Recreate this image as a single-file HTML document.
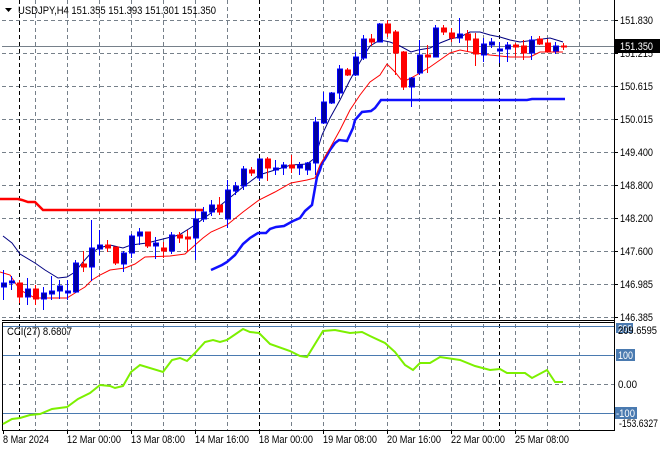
<!DOCTYPE html>
<html><head><meta charset="utf-8"><style>
html,body{margin:0;padding:0;background:#fff;}
svg{display:block;font-family:"Liberation Sans",sans-serif;}
</style></head><body>
<svg width="660" height="450" viewBox="0 0 660 450" xmlns="http://www.w3.org/2000/svg">
<rect width="660" height="450" fill="#fff"/>
<g stroke="#76808a" stroke-width="1" stroke-dasharray="4,3" fill="none">
<path d="M35.5 0V319M67.5 0V319M99.5 0V319M131.5 0V319M163.5 0V319M195.5 0V319M227.5 0V319M291.5 0V319M323.5 0V319M355.5 0V319M387.5 0V319M419.5 0V319M451.5 0V319M483.5 0V319M515.5 0V319M547.5 0V319M579.5 0V319"/>
<path d="M35.5 324V430M67.5 324V430M99.5 324V430M131.5 324V430M163.5 324V430M195.5 324V430M227.5 324V430M291.5 324V430M323.5 324V430M355.5 324V430M387.5 324V430M419.5 324V430M451.5 324V430M483.5 324V430M515.5 324V430M547.5 324V430M579.5 324V430"/>
<path d="M2 20.5H614M2 53.5H614M2 86.5H614M2 119.5H614M2 152.5H614M2 185.5H614M2 218.5H614M2 251.5H614M2 284.5H614M2 317.5H614M2 384.5H614"/>
</g>
<g stroke="#000" stroke-width="1" stroke-dasharray="4,3">
<path d="M19.5 0V319M259.5 0V319M499.5 0V319M19.5 324V430M259.5 324V430M499.5 324V430"/>
</g>
<line x1="2" y1="46.5" x2="614" y2="46.5" stroke="#76808a"/>
<g stroke="#4a7ab0" stroke-width="1">
<line x1="2" y1="326.5" x2="614" y2="326.5"/>
<line x1="2" y1="355.5" x2="614" y2="355.5"/>
<line x1="2" y1="413.5" x2="614" y2="413.5"/>
</g>
<g stroke="#000" stroke-width="1" fill="none">
<line x1="614.5" y1="0" x2="614.5" y2="431"/>
<line x1="2" y1="320.5" x2="614" y2="320.5"/>
<line x1="2" y1="322.5" x2="614" y2="322.5"/>
<line x1="2" y1="430.5" x2="614" y2="430.5"/>
<line x1="2.5" y1="322" x2="2.5" y2="431"/>
</g>
<g stroke="#000">
<path d="M614 20.5h4M614 53.5h4M614 86.5h4M614 119.5h4M614 152.5h4M614 185.5h4M614 218.5h4M614 251.5h4M614 284.5h4M614 317.5h4"/>
<path d="M3.5 430v4M67.5 430v4M131.5 430v4M195.5 430v4M259.5 430v4M323.5 430v4M387.5 430v4M451.5 430v4M515.5 430v4"/>
</g>
<polyline fill="none" stroke="#ff0000" stroke-width="2.5" points="0,199 18,199 22,200 28,202 35,202 43,210 203,210"/>
<polyline fill="none" stroke="#1010ff" stroke-width="2.5" points="211,270 222,265 227,262 235,255 243,244 250,238 258,233 266,233 270,229 276,227 284,226 293,221 300,218 305,211 312,205 315,188 317,177 320,170 322,163 325,159 330,150 335,143 339,140 347,141 353,128 355,120 362,112 371,111 375,108 381,100 388,100 527,100 532,99 565,99"/>
<polyline fill="none" stroke="#000080" stroke-width="1" points="3,236 12,243 20,254 35,263 45,270 58,278 67,277 75,272 83,262 91,253 99,248 110,245 123,248 131,245 147,243 163,239 179,235 195,225 211,213 227,200 243,187 259,175 275,170 291,165 307,164 315,158 322,135 330,118 340,100 350,80 360,62 370,46 380,40 390,42 400,46 411,52 418,50 430,48 440,43 450,39 460,37 470,32 480,32 490,35 500,37 510,40 520,42 535,40 550,38 563,42"/>
<polyline fill="none" stroke="#ff0000" stroke-width="1" points="0,272 10,275 20,290 35,298 67,298 75,293 85,287 92,280 100,275 110,270 125,268 135,264 145,257 170,256 185,254 195,245 203,238 211,232 227,225 243,212 259,200 275,192 291,183 307,180 315,178 320,165 330,148 340,130 350,110 360,95 370,82 380,75 387,64 395,72 403,82 411,78 420,73 430,67 440,60 450,53 460,50 475,53 490,55 510,57 530,57 540,52 563,52"/>
<g>
<g stroke="#0000ff" fill="#0000a0">
<path d="M3.5 270V300M11.5 276V290M27.5 278V305M43.5 287V310M51.5 276V300M59.5 280V299M67.5 280V300M75.5 260V293M91.5 220V281M99.5 230V255M123.5 251V272M131.5 234V258M139.5 228V245M155.5 237V259M171.5 232V254M195.5 210V260M203.5 207V222M211.5 200V216M227.5 180V228M235.5 182V195M243.5 166V190M259.5 158V181M275.5 160V175M283.5 162V175M299.5 162V175M307.5 162V175M315.5 117V175M323.5 92V124M331.5 92V104M339.5 65V99M355.5 52V76M363.5 35V60M379.5 23V42M411.5 77V107M419.5 40V75M435.5 25V57M459.5 18V43M483.5 38V62M491.5 38V48M499.5 42V63M507.5 42V62M531.5 36V60M555.5 42V54"/>
<rect x="1.5" y="283" width="5" height="4"/><rect x="9.5" y="281" width="5" height="2"/><rect x="25.5" y="289" width="5" height="8"/><rect x="41.5" y="293" width="5" height="6"/><rect x="49.5" y="291" width="5" height="3"/><rect x="57.5" y="286" width="5" height="5"/><rect x="65.5" y="291" width="5" height="2"/><rect x="73.5" y="263" width="5" height="29"/><rect x="89.5" y="248" width="5" height="19"/><rect x="97.5" y="245" width="5" height="4"/><rect x="121.5" y="253" width="5" height="11"/><rect x="129.5" y="236" width="5" height="17"/><rect x="137.5" y="232" width="5" height="4"/><rect x="153.5" y="243" width="5" height="3"/><rect x="169.5" y="235" width="5" height="16"/><rect x="193.5" y="219" width="5" height="19"/><rect x="201.5" y="212" width="5" height="7"/><rect x="209.5" y="205" width="5" height="7"/><rect x="225.5" y="190" width="5" height="29"/><rect x="233.5" y="186" width="5" height="5"/><rect x="241.5" y="169" width="5" height="17"/><rect x="257.5" y="159" width="5" height="19"/><rect x="273.5" y="168" width="5" height="2"/><rect x="281.5" y="165" width="5" height="3"/><rect x="297.5" y="165" width="5" height="3"/><rect x="305.5" y="163" width="5" height="7"/><rect x="313.5" y="122" width="5" height="41"/><rect x="321.5" y="102" width="5" height="21"/><rect x="329.5" y="93" width="5" height="10"/><rect x="337.5" y="69" width="5" height="24"/><rect x="353.5" y="57" width="5" height="18"/><rect x="361.5" y="39" width="5" height="19"/><rect x="377.5" y="24" width="5" height="18"/><rect x="409.5" y="78" width="5" height="9"/><rect x="417.5" y="55" width="5" height="18"/><rect x="433.5" y="28" width="5" height="29"/><rect x="457.5" y="34" width="5" height="4"/><rect x="481.5" y="44" width="5" height="11"/><rect x="489.5" y="42" width="5" height="3"/><rect x="497.5" y="49" width="5" height="2"/><rect x="505.5" y="45" width="5" height="4"/><rect x="529.5" y="40" width="5" height="13"/><rect x="553.5" y="46" width="5" height="5"/>
</g>
<g stroke="#ff0000" fill="#ff0000">
<path d="M19.5 280V303M35.5 285V305M83.5 251V272M107.5 240V252M115.5 247V265M147.5 232V248M163.5 242V258M179.5 232V243M187.5 230V252M219.5 197V215M251.5 167V176M267.5 157V181M291.5 155V173M347.5 68V76M371.5 34V46M387.5 20V37M395.5 30V75M403.5 51V90M427.5 45V73M443.5 25V35M451.5 28V42M467.5 30V52M475.5 33V66M515.5 43V56M523.5 40V60M539.5 36V45M547.5 39V52M563.5 43V50"/>
<rect x="17.5" y="283" width="5" height="14"/><rect x="33.5" y="289" width="5" height="10"/><rect x="81.5" y="264" width="5" height="3"/><rect x="105.5" y="245" width="5" height="3"/><rect x="113.5" y="247" width="5" height="16"/><rect x="145.5" y="232" width="5" height="14"/><rect x="161.5" y="248" width="5" height="3"/><rect x="177.5" y="235" width="5" height="3"/><rect x="185.5" y="237" width="5" height="2"/><rect x="217.5" y="205" width="5" height="7"/><rect x="249.5" y="170" width="5" height="3"/><rect x="265.5" y="159" width="5" height="9"/><rect x="289.5" y="165" width="5" height="3"/><rect x="345.5" y="70" width="5" height="5"/><rect x="369.5" y="39" width="5" height="3"/><rect x="385.5" y="24" width="5" height="9"/><rect x="393.5" y="32" width="5" height="21"/><rect x="401.5" y="52" width="5" height="35"/><rect x="425.5" y="55" width="5" height="2"/><rect x="441.5" y="28" width="5" height="4"/><rect x="449.5" y="33" width="5" height="5"/><rect x="465.5" y="34" width="5" height="6"/><rect x="473.5" y="39" width="5" height="15"/><rect x="513.5" y="45" width="5" height="2"/><rect x="521.5" y="46" width="5" height="7"/><rect x="537.5" y="39" width="5" height="5"/><rect x="545.5" y="43" width="5" height="8"/><rect x="561.5" y="46" width="5" height="1"/>
</g>
</g>
<polyline fill="none" stroke="#7cf000" stroke-width="2" points="3,424 12,419 20,418 30,415 40,414 52,409 67,407 78,399 90,393 100,385 110,386 115,388 123,386 131,372 140,365 163,372 172,360 180,358 187,361 195,353 205,342 213,340 220,342 227,340 243,329 250,332 259,333 270,344 290,351 300,356 307,357 323,331 335,330 350,333 362,332 370,336 385,343 395,352 405,365 413,370 420,363 430,363 440,357 460,360 475,366 490,370 500,369 507,373 525,373 532,378 547,370 555,382 563,382"/>
<path d="M5 8h7l-3.5 4z" fill="#000"/>
<text x="18" y="14" font-size="11" fill="#000" textLength="198" lengthAdjust="spacingAndGlyphs">USDJPY,H4  151.355 151.393 151.301 151.350</text>
<text x="7" y="335" font-size="11" fill="#000" textLength="65" lengthAdjust="spacingAndGlyphs">CCI(27) 8.6807</text>
<g font-size="11" fill="#000">
<text x="620" y="24" textLength="33" lengthAdjust="spacingAndGlyphs">151.830</text>
<text x="620" y="57" textLength="33" lengthAdjust="spacingAndGlyphs">151.215</text>
<text x="620" y="90" textLength="33" lengthAdjust="spacingAndGlyphs">150.615</text>
<text x="620" y="123" textLength="33" lengthAdjust="spacingAndGlyphs">150.015</text>
<text x="620" y="156" textLength="33" lengthAdjust="spacingAndGlyphs">149.400</text>
<text x="620" y="189" textLength="33" lengthAdjust="spacingAndGlyphs">148.800</text>
<text x="620" y="222" textLength="33" lengthAdjust="spacingAndGlyphs">148.200</text>
<text x="620" y="255" textLength="33" lengthAdjust="spacingAndGlyphs">147.600</text>
<text x="620" y="288" textLength="33" lengthAdjust="spacingAndGlyphs">146.985</text>
<text x="620" y="321" textLength="33" lengthAdjust="spacingAndGlyphs">146.385</text>
</g>
<rect x="615" y="39" width="45" height="14" fill="#000"/>
<text x="620" y="50" font-size="11" fill="#fff" textLength="33" lengthAdjust="spacingAndGlyphs">151.350</text>
<rect x="616" y="323" width="17" height="10" fill="#4a7ab0"/>
<text x="618" y="332" font-size="10" fill="#fff" textLength="14" lengthAdjust="spacingAndGlyphs">200</text>
<text x="618" y="334" font-size="11" fill="#000" textLength="39" lengthAdjust="spacingAndGlyphs">209.6595</text>
<rect x="616" y="349" width="19" height="12" fill="#4a7ab0"/>
<text x="618" y="359" font-size="11" fill="#fff" textLength="15" lengthAdjust="spacingAndGlyphs">100</text>
<text x="618" y="388" font-size="11" fill="#000" textLength="19" lengthAdjust="spacingAndGlyphs">0.00</text>
<rect x="615" y="407" width="22" height="12" fill="#4a7ab0"/>
<text x="616" y="417" font-size="11" fill="#fff" textLength="19" lengthAdjust="spacingAndGlyphs">-100</text>
<text x="619" y="427" font-size="11" fill="#000" textLength="39" lengthAdjust="spacingAndGlyphs">-153.6327</text>
<g font-size="11" fill="#000">
<text x="3" y="443" textLength="46" lengthAdjust="spacingAndGlyphs">8 Mar 2024</text>
<text x="67" y="443" textLength="54" lengthAdjust="spacingAndGlyphs">12 Mar 00:00</text>
<text x="131" y="443" textLength="54" lengthAdjust="spacingAndGlyphs">13 Mar 08:00</text>
<text x="195" y="443" textLength="54" lengthAdjust="spacingAndGlyphs">14 Mar 16:00</text>
<text x="259" y="443" textLength="54" lengthAdjust="spacingAndGlyphs">18 Mar 00:00</text>
<text x="323" y="443" textLength="54" lengthAdjust="spacingAndGlyphs">19 Mar 08:00</text>
<text x="387" y="443" textLength="54" lengthAdjust="spacingAndGlyphs">20 Mar 16:00</text>
<text x="451" y="443" textLength="54" lengthAdjust="spacingAndGlyphs">22 Mar 00:00</text>
<text x="515" y="443" textLength="54" lengthAdjust="spacingAndGlyphs">25 Mar 08:00</text>
</g>
</svg>
</body></html>
